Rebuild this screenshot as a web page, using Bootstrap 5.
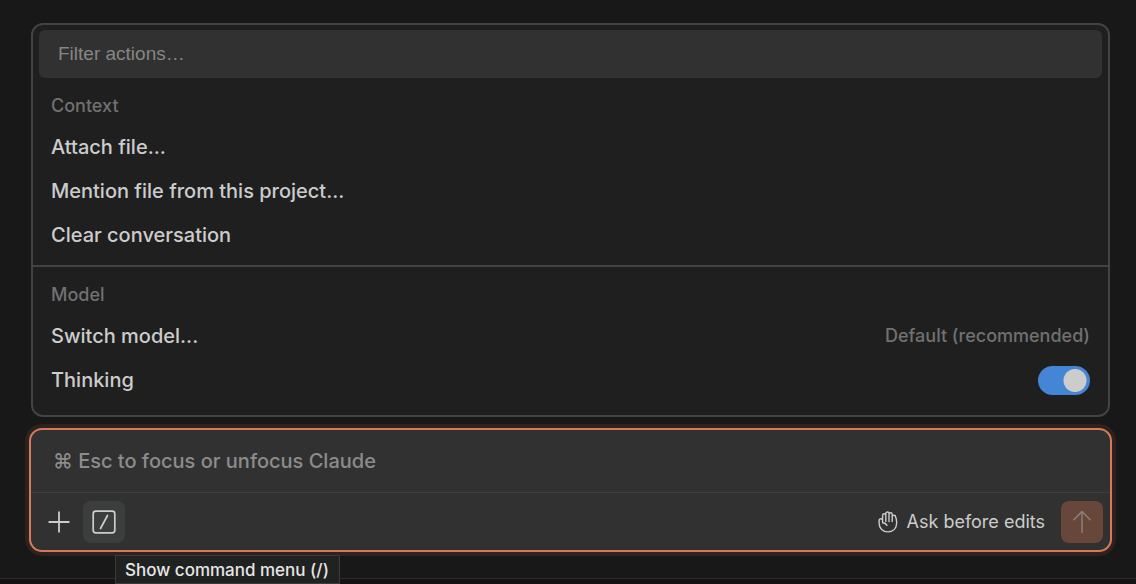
<!DOCTYPE html>
<html lang="en" data-bs-theme="dark">
<head>
<meta charset="utf-8">
<meta name="viewport" content="width=device-width, initial-scale=1">
<title>Command menu</title>
<link href="https://cdn.jsdelivr.net/npm/bootstrap@5.3.0/dist/css/bootstrap.min.css" rel="stylesheet">
<style>
  body { background: #181818; color: #cccccc; font-family: Inter, "Liberation Sans", sans-serif; font-size: 20px; line-height: 28px; }
  .chat { padding: 23px 24px 26px 29px; }
  .action-menu { background: #1f1f1f; border: 2px solid #434343; border-radius: 12px; margin: 0 2px; padding-bottom: 13px; }
  .filter-wrap { padding: 5px 6px 0; }
  .filter-input, .filter-input:focus { background: #313131; color: #cccccc; border: 0; border-radius: 6px; height: 48px; padding: 0 19px; font-family: "Liberation Sans", sans-serif; font-size: 19px; box-shadow: none; }
  .filter-input::placeholder { color: #868686; }
  .section-title { color: #717171; font-size: 18px; line-height: 26px; font-weight: 500; margin: 0; padding: 15px 18px 6px; }
  .action-item { color: #cccccc; background: none; border: 0; height: 44px; padding: 0 18px; text-align: left; font-weight: 500; }
  .action-menu hr { margin: 8px 0 0; border-top: 2px solid #434343; opacity: 1; }
  .action-value { color: #717171; font-size: 18px; }
  .toggle-switch.form-check-input { width: 52px; height: 29px; margin: 0; border: 0; background-color: #4585d6; background-image: radial-gradient(circle at 37px 50%, #cccccc 11px, transparent 12px); background-size: 100% 100%; background-position: 0 0; border-radius: 15px; }
  .toggle-switch.form-check-input:checked { background-color: #4585d6; background-image: radial-gradient(circle at 37px 50%, #cccccc 11px, transparent 12px); }
  .composer { background: #313131; border: 2px solid #d27c5c; border-radius: 13px; box-shadow: 0 0 0 4px #2f211d; margin-top: 11px; }
  .prompt-input, .prompt-input:focus { background: none; color: #cccccc; border: 0; box-shadow: none; height: 62px; padding: 0 22px; font-size: 20px; font-family: Inter, "DejaVu Sans", sans-serif; font-weight: 500; }
  .prompt-input::placeholder { color: #8c8c8c; }
  .composer-bar { border-top: 1px solid #3e3e3e; padding: 8px 7px 7px; gap: 3px; }
  .tool-btn { width: 42px; height: 42px; padding: 0; border: 0; border-radius: 8px; color: #cccccc; background: none; }
  .tool-btn.active { background: #3c3d3d; }
  .send-btn { background: #67473a; color: #8b7f7a; }
  .mode-btn { color: #cccccc; background: none; border: 0; padding: 0 13px 0 0; font-size: 18px; gap: 9px; }
  .hint { top: calc(100% + 12px); left: 32px; background: #202121; border: 1px solid #3b3b3b; color: #e6e6e6; font-size: 17px; font-weight: 500; line-height: 26px; padding: 1px 10px 0 9px; white-space: nowrap; z-index: 2; }
  .status-edge { background: #151314; border-top: 1px solid #2d2a2b; }
</style>
</head>
<body class="min-vh-100 d-flex flex-column">
<main class="chat">
  <section class="action-menu" aria-label="Actions">
    <div class="filter-wrap"><input type="text" class="form-control filter-input" placeholder="Filter actions…" aria-label="Filter actions"></div>
    <h2 class="section-title">Context</h2>
    <button type="button" class="action-item d-flex align-items-center w-100">Attach file...</button>
    <button type="button" class="action-item d-flex align-items-center w-100">Mention file from this project...</button>
    <button type="button" class="action-item d-flex align-items-center w-100">Clear conversation</button>
    <hr>
    <h2 class="section-title">Model</h2>
    <button type="button" class="action-item d-flex align-items-center justify-content-between w-100">Switch model...<span class="action-value">Default (recommended)</span></button>
    <div class="action-item d-flex align-items-center justify-content-between">
      <label for="thinking">Thinking</label>
      <input class="form-check-input toggle-switch" type="checkbox" role="switch" id="thinking" checked>
    </div>
  </section>

  <form class="composer">
    <input type="text" class="form-control prompt-input" placeholder="⌘ Esc to focus or unfocus Claude" aria-label="Message">
    <div class="composer-bar d-flex align-items-center">
      <button type="button" class="tool-btn d-flex align-items-center justify-content-center" aria-label="Add">
        <svg width="22" height="22" viewBox="0 0 22 22" fill="none" stroke="currentColor" stroke-width="1.8" stroke-linecap="round"><path d="M11 1.2v19.6M1.2 11h19.6"/></svg>
      </button>
      <div class="position-relative">
        <button type="button" class="tool-btn active d-flex align-items-center justify-content-center" aria-label="Show command menu">
          <svg width="24" height="24" viewBox="0 0 24 24" fill="none" stroke="currentColor" stroke-width="1.7" stroke-linecap="round"><rect x="1.2" y="1.2" width="21.6" height="21.6" rx="2.6"/><path d="M15.5 5.5 8.5 18.5"/></svg>
        </button>
        <div class="hint position-absolute" role="tooltip">Show command menu (/)</div>
      </div>
      <button type="button" class="mode-btn d-flex align-items-center ms-auto">
        <svg width="20" height="22" viewBox="0 0 20 22" fill="none" stroke="currentColor" stroke-width="1.4" stroke-linecap="round" stroke-linejoin="round"><path d="M4.6 8.5V4.4a1.6 1.6 0 0 1 3.2 0v6.1M7.8 9.5V2.6a1.6 1.6 0 0 1 3.2 0v7.9M11 9.5V3.4a1.6 1.6 0 0 1 3.2 0v7.1M14.2 10.5V6a1.7 1.7 0 0 1 3.4 0"/><path d="M17.6 6c.7 1.2 1.1 3.4 1.1 5.6 0 5.6-3.4 9.3-8.7 9.3-5.2 0-8.9-3.6-8.9-8.6V9.6c0-1.2.8-1.9 1.7-1.9 1.1 0 1.8.8 1.8 1.9v2.1c1.9.1 3.5.9 4.4 2.6"/></svg>
        Ask before edits
      </button>
      <button type="submit" class="tool-btn send-btn d-flex align-items-center justify-content-center" aria-label="Send">
        <svg width="20" height="24" viewBox="0 0 20 24" fill="none" stroke="currentColor" stroke-width="1.5" stroke-linecap="round" stroke-linejoin="round"><path d="M10 22.5V1.5M1.8 9.7 10 1.5l8.2 8.2"/></svg>
      </button>
    </div>
  </form>
</main>
<div class="status-edge flex-grow-1"></div>
<script src="https://cdn.jsdelivr.net/npm/bootstrap@5.3.0/dist/js/bootstrap.bundle.min.js"></script>
</body>
</html>
